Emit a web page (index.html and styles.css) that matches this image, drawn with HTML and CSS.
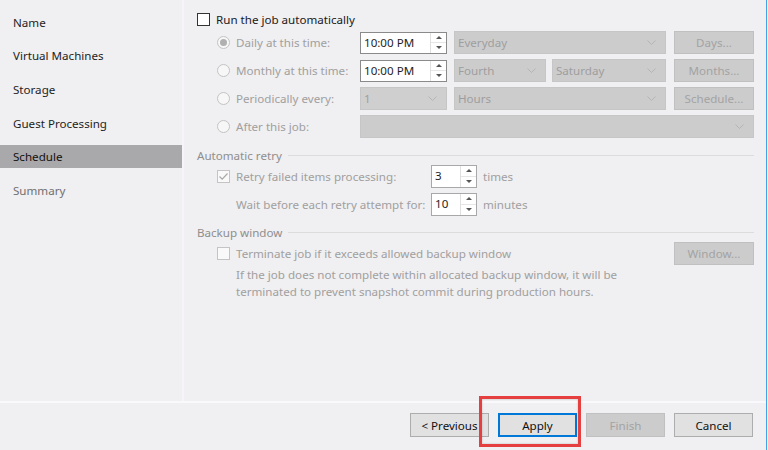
FILE: index.html
```html
<!DOCTYPE html>
<html>
<head>
<meta charset="utf-8">
<link rel="stylesheet" href="styles.css">
</head>
<body>
<div class="window">
  <div class="main">
    <nav class="sidebar">
      <div class="nav-item">Name</div>
      <div class="nav-item">Virtual Machines</div>
      <div class="nav-item">Storage</div>
      <div class="nav-item">Guest Processing</div>
      <div class="nav-item selected">Schedule</div>
      <div class="nav-item muted">Summary</div>
    </nav>
    <div class="divider"></div>
    <section class="content">
      <div class="run-row">
        <span class="checkbox"></span>
        <span class="run-label">Run the job automatically</span>
      </div>

      <div class="schedule">
        <div class="sched-row">
          <span class="radio checked"><span class="dot"></span></span>
          <span class="sched-label">Daily at this time:</span>
          <div class="spin time">
            <span class="spin-value">10:00 PM</span>
            <span class="spin-btns"><span class="up"></span><span class="down"></span></span>
          </div>
          <div class="combo wide"><span>Everyday</span><svg class="chev" width="9" height="5" viewBox="0 0 9 5"><polyline points="0.5,0.5 4.5,4.5 8.5,0.5" fill="none" stroke="#b4b4b4" stroke-width="1"/></svg></div>
          <button class="btn disabled side">Days...</button>
        </div>
        <div class="sched-row">
          <span class="radio"></span>
          <span class="sched-label">Monthly at this time:</span>
          <div class="spin time">
            <span class="spin-value">10:00 PM</span>
            <span class="spin-btns"><span class="up"></span><span class="down"></span></span>
          </div>
          <div class="combo small"><span>Fourth</span><svg class="chev" width="9" height="5" viewBox="0 0 9 5"><polyline points="0.5,0.5 4.5,4.5 8.5,0.5" fill="none" stroke="#b4b4b4" stroke-width="1"/></svg></div>
          <div class="combo medium"><span>Saturday</span><svg class="chev" width="9" height="5" viewBox="0 0 9 5"><polyline points="0.5,0.5 4.5,4.5 8.5,0.5" fill="none" stroke="#b4b4b4" stroke-width="1"/></svg></div>
          <button class="btn disabled side">Months...</button>
        </div>
        <div class="sched-row">
          <span class="radio"></span>
          <span class="sched-label">Periodically every:</span>
          <div class="combo time"><span>1</span><svg class="chev" width="9" height="5" viewBox="0 0 9 5"><polyline points="0.5,0.5 4.5,4.5 8.5,0.5" fill="none" stroke="#b4b4b4" stroke-width="1"/></svg></div>
          <div class="combo wide"><span>Hours</span><svg class="chev" width="9" height="5" viewBox="0 0 9 5"><polyline points="0.5,0.5 4.5,4.5 8.5,0.5" fill="none" stroke="#b4b4b4" stroke-width="1"/></svg></div>
          <button class="btn disabled side">Schedule...</button>
        </div>
        <div class="sched-row">
          <span class="radio"></span>
          <span class="sched-label">After this job:</span>
          <div class="combo full"><span></span><svg class="chev" width="9" height="5" viewBox="0 0 9 5"><polyline points="0.5,0.5 4.5,4.5 8.5,0.5" fill="none" stroke="#b4b4b4" stroke-width="1"/></svg></div>
        </div>
      </div>

      <div class="group-head retry-head"><span>Automatic retry</span><span class="rule"></span></div>
      <div class="retry">
        <div class="retry-row">
          <span class="checkbox dis checked"><svg width="11" height="11" viewBox="0 0 11 11"><polyline points="1.5,5.5 4.2,8.2 9.5,2.5" fill="none" stroke="#a8a8a8" stroke-width="1.2"/></svg></span>
          <span class="retry-label">Retry failed items processing:</span>
          <div class="spin num">
            <span class="spin-value">3</span>
            <span class="spin-btns"><span class="up"></span><span class="down"></span></span>
          </div>
          <span class="unit">times</span>
        </div>
        <div class="retry-row">
          <span class="retry-label no-box">Wait before each retry attempt for:</span>
          <div class="spin num">
            <span class="spin-value">10</span>
            <span class="spin-btns"><span class="up"></span><span class="down"></span></span>
          </div>
          <span class="unit">minutes</span>
        </div>
      </div>

      <div class="group-head backup-head"><span>Backup window</span><span class="rule"></span></div>
      <div class="backup">
        <span class="checkbox dis"></span>
        <span class="backup-label">Terminate job if it exceeds allowed backup window</span>
        <button class="btn disabled side">Window...</button>
        <p class="backup-desc">If the job does not complete within allocated backup window, it will be<br>terminated to prevent snapshot commit during production hours.</p>
      </div>
    </section>
  </div>
  <div class="separator"></div>
  <footer class="footer">
    <button class="btn">&lt; Previous</button>
    <span class="highlight-wrap">
      <button class="btn primary">Apply</button>
      <span class="highlight"></span>
    </span>
    <button class="btn disabled">Finish</button>
    <button class="btn">Cancel</button>
  </footer>
</div>
</body>
</html>
```

FILE: styles.css
```css
* { box-sizing: border-box; }
html, body {
  margin: 0;
  padding: 0;
  width: 768px;
  height: 450px;
  overflow: hidden;
  background: #f7f7f9;
}
body {
  font-family: "Noto Sans", "Open Sans", sans-serif;
  font-size: 11.6px;
  color: #1e1e1e;
}
.window {
  width: 767px;
  height: 450px;
  background: #f0eff1;
  border-right: 1px solid #4b9ee3;
  display: flex;
  flex-direction: column;
}
.main {
  display: flex;
  height: 401px;
}
.sidebar {
  width: 182px;
  display: flex;
  flex-direction: column;
  gap: 10.7px;
  padding-top: 10.5px;
}
.nav-item {
  height: 23px;
  line-height: 23px;
  padding-left: 13px;
  color: #1e1e1e;
  white-space: nowrap;
}
.nav-item.selected { background: #a9a8aa; color: #111; }
.nav-item.muted { color: #707070; }
.divider {
  width: 2px;
  background: #f6f4f8;
}
.content {
  flex: 1;
  padding: 13px 12px 0 13px;
  color: #a0a0a0;
  white-space: nowrap;
}
.run-row {
  display: flex;
  align-items: center;
  height: 13px;
}
.checkbox {
  width: 13px;
  height: 13px;
  border: 1px solid #333;
  background: #fff;
  flex: none;
  display: inline-flex;
  align-items: center;
  justify-content: center;
}
.checkbox.dis { border-color: #c4c4c4; background: #f9f9f9; }
.run-label { margin-left: 6px; color: #1a1a1a; }

.schedule {
  margin-top: 5px;
  padding-left: 20px;
  display: flex;
  flex-direction: column;
  gap: 5px;
}
.sched-row {
  display: flex;
  align-items: center;
  height: 23px;
}
.radio {
  width: 13px;
  height: 13px;
  border: 1px solid #c4c4c4;
  border-radius: 50%;
  background: #f7f7f7;
  flex: none;
  display: inline-flex;
  align-items: center;
  justify-content: center;
}
.radio .dot {
  width: 7px;
  height: 7px;
  border-radius: 50%;
  background: #b0b0b0;
}
.sched-label { width: 124px; margin-left: 6px; flex: none; }

.spin {
  height: 22px;
  background: #fff;
  border: 1px solid #8a8a8a;
  display: flex;
  align-items: stretch;
  flex: none;
  color: #1e1e1e;
}
.spin.time { width: 87px; }
.spin.num { width: 46px; border-color: #a8a8a8; }
.spin-value { flex: 1; padding-left: 3px; line-height: 20px; }
.spin-btns {
  width: 16px;
  border-left: 1px solid #e0e0e0;
  display: flex;
  flex-direction: column;
}
.spin-btns .up, .spin-btns .down {
  flex: 1;
  position: relative;
}
.spin-btns .up { border-bottom: 1px solid #e6e6e6; }
.spin-btns .up::after, .spin-btns .down::after {
  content: "";
  position: absolute;
  left: 5px;
  width: 0;
  height: 0;
  border-left: 3px solid transparent;
  border-right: 3px solid transparent;
}
.spin-btns .up::after { top: 3px; border-bottom: 3px solid #555; }
.spin-btns .down::after { top: 3px; border-top: 3px solid #555; }

.combo {
  height: 23px;
  background: #cdcccd;
  border: 1px solid #c6c6c6;
  display: flex;
  align-items: center;
  justify-content: space-between;
  padding: 0 9px 0 3px;
  color: #9e9e9e;
  flex: none;
}
.combo.time { width: 87px; background: #cfcfcf; }
.combo.wide { width: 212px; margin-left: 7px; }
.combo.small { width: 92px; margin-left: 7px; }
.combo.medium { width: 114px; margin-left: 6px; }
.combo.full { width: 394px; }
.chev { flex: none; }

.btn {
  font-family: inherit;
  font-size: 11.6px;
  width: 79px;
  height: 24px;
  padding: 0;
  background: #e1e1e1;
  border: 1px solid #adadad;
  color: #111;
}
.btn.disabled {
  background: #cccccc;
  border-color: #c0c0c0;
  color: #a3a3a3;
}
.btn.side { margin-left: 8px; height: 23px; width: 80px; }

.group-head {
  display: flex;
  align-items: center;
  height: 16px;
  color: #8e8e8e;
}
.group-head .rule {
  flex: 1;
  height: 1px;
  background: #dcdcdc;
  margin-left: 6px;
}
.retry-head { margin-top: 9px; }
.retry {
  margin-top: 2px;
  padding-left: 20px;
  display: flex;
  flex-direction: column;
  gap: 5px;
}
.retry-row {
  display: flex;
  align-items: center;
  height: 23px;
}
.retry-row .spin { height: 23px; }
.retry-label { width: 195px; margin-left: 6px; flex: none; }
.retry-label.no-box { width: 214px; margin-left: 0; padding-left: 19px; }
.unit { margin-left: 6px; }

.backup-head { margin-top: 8px; }
.backup {
  margin-top: 2px;
  padding-left: 20px;
  display: grid;
  grid-template-columns: 13px 1fr auto;
  column-gap: 6px;
  align-items: center;
}
.backup .btn.side { margin-left: 0; }
.backup-desc {
  grid-column: 2 / 4;
  margin: 1px 0 0;
  line-height: 17px;
}

.separator {
  height: 2px;
  background: #f9f8fb;
}
.footer {
  flex: 1;
  display: flex;
  justify-content: flex-end;
  align-items: flex-start;
  gap: 9px;
  padding: 10px 13px 0 0;
}
.highlight-wrap { position: relative; display: block; height: 24px; }
.btn.primary {
  border-color: #0078d7;
  box-shadow: inset 0 0 0 1px #0078d7;
}
.highlight {
  position: absolute;
  left: -19px;
  top: -17px;
  width: 102px;
  height: 51px;
  border: 3px solid #e5403f;
  box-shadow: inset 0 0 2px rgba(0,0,0,0.25);
  pointer-events: none;
}
```
